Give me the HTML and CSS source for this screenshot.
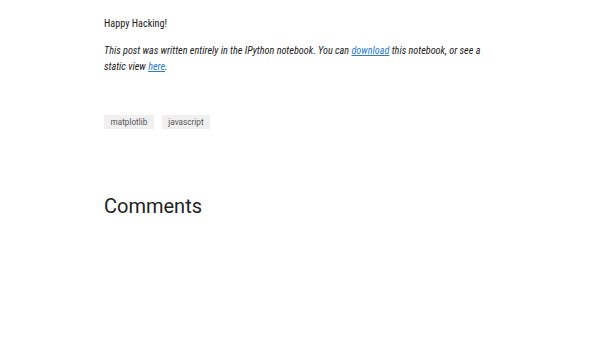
FILE: index.html
```html
<!DOCTYPE html>
<html>
<head>
<meta charset="utf-8">
<link rel="stylesheet" href="styles.css">
</head>
<body>
<div class="page">
  <article class="post">
    <p class="cut">rotors.</p>
    <p>Happy Hacking!</p>
    <p class="note"><em>This post was written entirely in the IPython notebook. You can <a href="#">download</a> this notebook, or see a static view <a href="#">here</a>.</em></p>
    <ul class="tags">
      <li class="tag">matplotlib</li>
      <li class="tag">javascript</li>
    </ul>
  </article>
  <section class="comments">
    <h2>Comments</h2>
  </section>
</div>
</body>
</html>
```

FILE: styles.css
```css
html, body {
  margin: 0;
  padding: 0;
  background: #fff;
}
body {
  font-family: Roboto, "Open Sans", sans-serif;
  font-size: 10.2px;
  font-stretch: 75%;
  line-height: 16px;
  color: #222;
}
.page {
  width: 392px;
  padding-left: 104px;
  margin-top: -11px;
}
.post p {
  margin: 0 0 11px 0;
}
.note a {
  color: #2a7ae2;
}
.tags {
  list-style: none;
  margin: 40px 0 0 0;
  padding: 0;
  display: flex;
  gap: 8px;
}
.tag {
  background: #f0f0f0;
  color: #555;
  font-size: 8.2px;
  font-stretch: 100%;
  line-height: 14px;
  padding: 0 6.5px;
}
.comments h2 {
  margin: 63px 0 0 0;
  font-weight: 400;
  font-size: 20px;
  font-stretch: 100%;
  line-height: 28px;
  color: #222;
}
```
